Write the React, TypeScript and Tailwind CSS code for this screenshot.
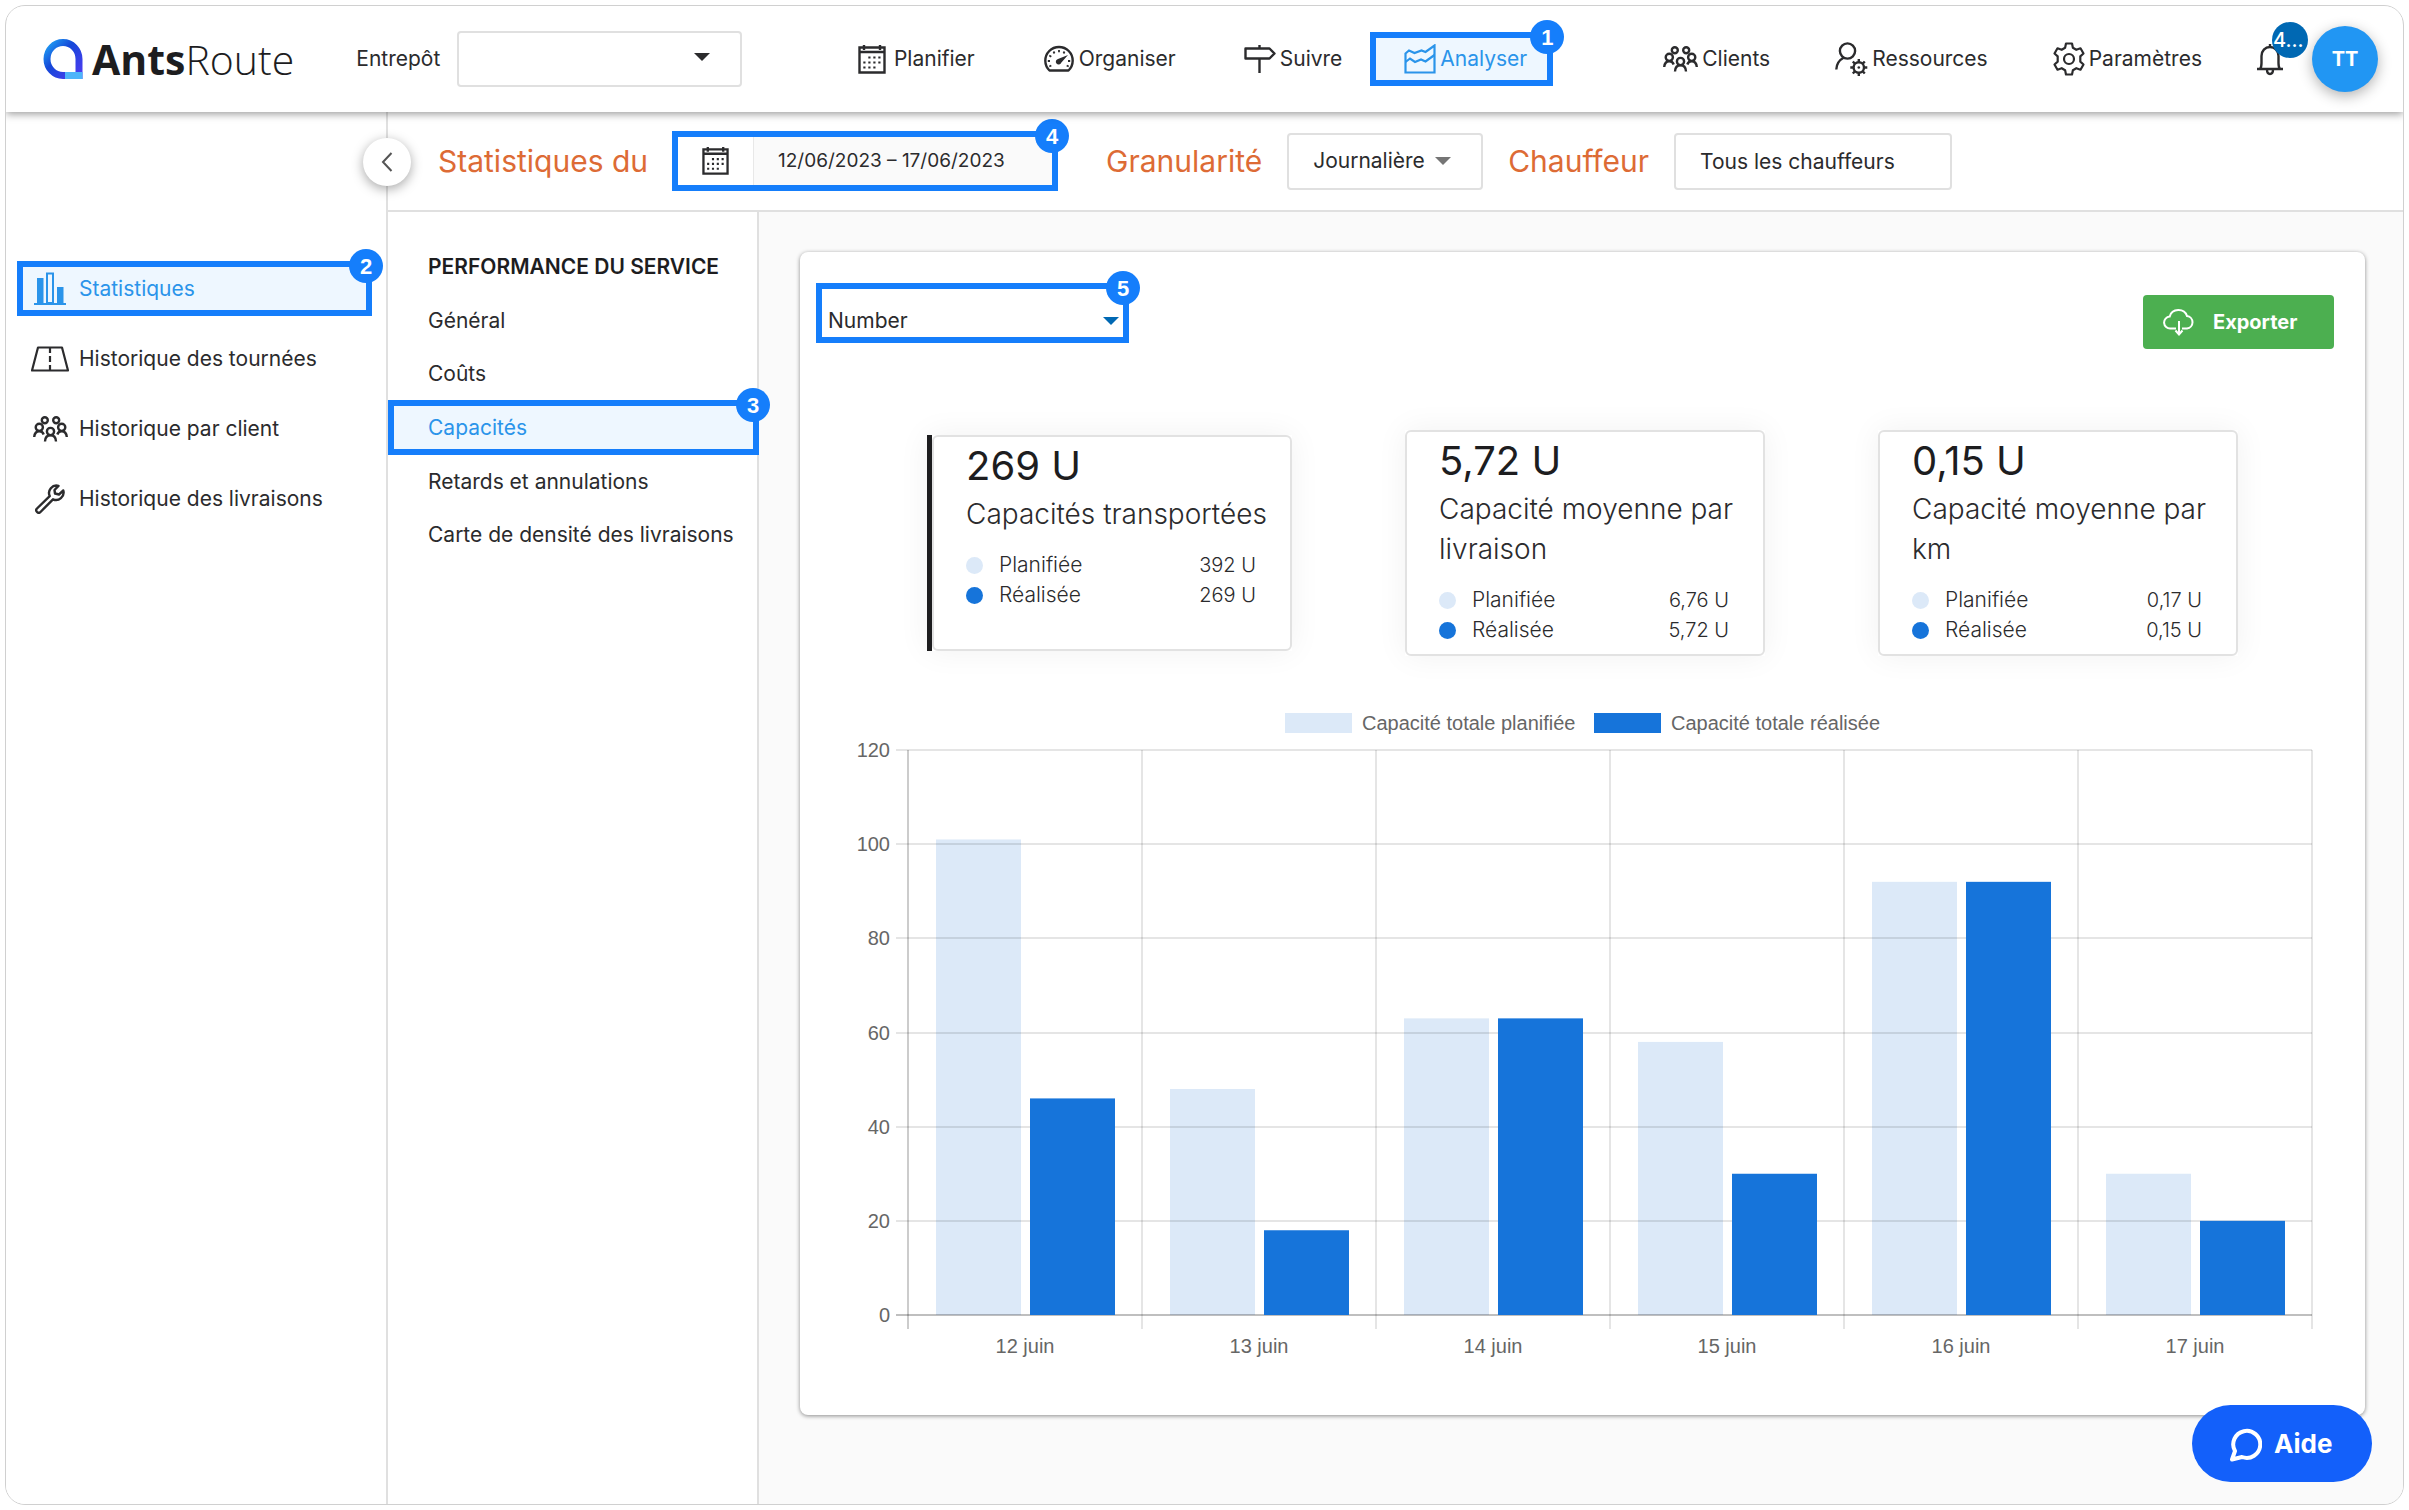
import type { ReactNode } from 'react'

const days = [
  { label: '12 juin', planned: 101, done: 46 },
  { label: '13 juin', planned: 48, done: 18 },
  { label: '14 juin', planned: 63, done: 63 },
  { label: '15 juin', planned: 58, done: 30 },
  { label: '16 juin', planned: 92, done: 92 },
  { label: '17 juin', planned: 30, done: 20 },
]

const cards = [
  { value: '269 U', title: 'Capacités transportées', planned: '392 U', done: '269 U', active: true },
  { value: '5,72 U', title: 'Capacité moyenne par livraison', planned: '6,76 U', done: '5,72 U' },
  { value: '0,15 U', title: 'Capacité moyenne par km', planned: '0,17 U', done: '0,15 U' },
]

function Step({ n }: { n: number }) {
  return (
    <span className="absolute -right-[17px] -top-[18px] z-10 flex size-[34px] items-center justify-center rounded-full bg-[#157efb] font-['Liberation_Sans',sans-serif] text-[22px] font-bold text-white">
      {n}
    </span>
  )
}

function Caret({ className }: { className?: string }) {
  return (
    <svg viewBox="0 0 16 8" className={`h-2 w-4 ${className ?? ''}`} fill="currentColor" aria-hidden="true">
      <path d="M0 0h16L8 8z" />
    </svg>
  )
}

function CalendarIcon({ className }: { className?: string }) {
  return (
    <svg viewBox="0 0 28 29" className={className} fill="none" stroke="currentColor" strokeWidth="2.400" aria-hidden="true">
      <path d="M1.500 2.500h25v25h-25zM1.500 7h25M6 0v5M22 0v5" />
      <path d="M10.300 12.500h14M5.300 17.500h19M5.300 22.500h14" strokeWidth="2.200" strokeDasharray="2.200 2.800" />
    </svg>
  )
}

function GaugeIcon() {
  return (
    <svg viewBox="0 0 32 28" className="h-7 w-8" fill="none" stroke="currentColor" strokeWidth="2.400" aria-hidden="true">
      <path d="M6.500 25.500A13.700 13.700 0 1 1 25.500 25.500z" strokeLinejoin="round" />
      <path d="M16 5v2.200M10.500 6.500l1 2M21.500 6.500l-1 2M6.300 10.500l2 1.200M4.800 16h2.200M27.200 16H25M6.300 21.500l2-1M25.700 21.500l-2-1" strokeWidth="1.800" />
      <path d="M25 10 15 14a2.800 2.800 0 1 0 3.200 3.800z" fill="currentColor" stroke="none" />
    </svg>
  )
}

function SignIcon() {
  return (
    <svg viewBox="0 0 32 30" className="h-[30px] w-8" fill="none" stroke="currentColor" strokeWidth="2.400" aria-hidden="true">
      <path d="M1.500 4.500h24l5 5-5 5h-24zM15.500 1v3.500M15.500 14.500V29" strokeLinejoin="round" />
    </svg>
  )
}

function AreaIcon() {
  return (
    <svg viewBox="0 0 32 30" className="h-[30px] w-8" fill="none" stroke="currentColor" strokeWidth="2.200" aria-hidden="true">
      <path d="M1.500 9.500 5 6.500l5.500 2.500 7-2.500 4 1.500 9-6.500V28.500H1.500z" />
      <path d="m1.500 18 4.500-3.500 5 3.500 6-2.500 4.500 2 9-6.500" />
    </svg>
  )
}

function PeopleIcon() {
  return (
    <svg viewBox="0 0 35 26" className="h-[26px] w-[35px]" fill="none" stroke="currentColor" strokeWidth="2.400" aria-hidden="true">
      <circle cx="11.800" cy="4.300" r="3" />
      <circle cx="23.200" cy="4.300" r="3" />
      <circle cx="6.300" cy="11.300" r="3.600" />
      <circle cx="28.700" cy="11.300" r="3.600" />
      <circle cx="17.500" cy="15.500" r="3.600" />
      <path d="M1.200 21c.3-3.500 2-5.800 5.100-5.800 2.200 0 3.700 1.300 4.400 3.300M24.300 18.500c.7-2 2.200-3.300 4.400-3.300 3.100 0 4.800 2.300 5.100 5.800M12 25.500c.2-4 2.200-6.200 5.500-6.200s5.300 2.200 5.500 6.200" />
    </svg>
  )
}

function DriverIcon() {
  return (
    <svg viewBox="0 0 33 35" className="h-[35px] w-[33px]" fill="none" stroke="currentColor" strokeWidth="2.400" aria-hidden="true">
      <circle cx="12.500" cy="9" r="7.600" />
      <path d="M1.300 27.500c.2-6 3-9.500 7.700-12" />
      <circle cx="23.800" cy="25.500" r="5.200" />
      <circle cx="23.800" cy="25.500" r="1.300" fill="currentColor" stroke="none" />
      <path d="M23.800 17v3M23.800 31v3M15.300 25.500h3M29.300 25.500h3M17.800 19.500l2.100 2.100M27.700 29.400l2.100 2.100M29.800 19.500l-2.100 2.100M19.900 29.400l-2.100 2.100" />
    </svg>
  )
}

function GearIcon() {
  return (
    <svg viewBox="0 0 32 34" className="h-[34px] w-8" fill="none" stroke="currentColor" strokeWidth="2.200" strokeLinejoin="round" aria-hidden="true">
      <path d="M13 1.500h6l.9 4.300 3.400 2 4.200-1.500 3 5.200-3.200 2.900v5.200l3.200 2.900-3 5.200-4.200-1.500-3.400 2-.9 4.300h-6l-.9-4.300-3.400-2-4.200 1.500-3-5.200 3.200-2.900v-5.200L1.500 11.500l3-5.200 4.200 1.500 3.400-2z" />
      <circle cx="16" cy="17" r="5" />
    </svg>
  )
}

function RoadIcon() {
  return (
    <svg viewBox="0 0 38 26" className="h-[26px] w-[38px]" fill="none" stroke="currentColor" strokeWidth="2.200" aria-hidden="true">
      <path d="M7 1.500h24l6 23H1zM19 2v5M19 10v6M19 19v5" strokeLinejoin="round" />
    </svg>
  )
}

function WrenchIcon() {
  return (
    <svg viewBox="0 0 30 30" className="size-[30px]" fill="none" stroke="currentColor" strokeWidth="2.400" strokeLinejoin="round" aria-hidden="true">
      <path d="M23.500 1.800a7.500 7.500 0 0 0-8.800 10.300L2 24.500a2.400 2.400 0 0 0 3.500 3.500L18 15.300A7.500 7.500 0 0 0 28.300 6.500L24 10.500l-4-1-.5-3.500z" />
    </svg>
  )
}

function BarsIcon() {
  return (
    <svg viewBox="0 0 32 33" className="h-[33px] w-8" aria-hidden="true">
      <path d="M0 31h32v2H0zM3 6h6.500v25H3zM23 15h6.500v16H23z" fill="currentColor" />
      <path d="M13 1.500h6V31h-6z" fill="none" stroke="currentColor" strokeWidth="2" />
    </svg>
  )
}

function NavItem({ icon, children }: { icon: ReactNode; children: ReactNode }) {
  return (
    <a href="#" className="flex items-center gap-1 whitespace-nowrap">
      {icon}
      {children}
    </a>
  )
}

function SideItem({ icon, children }: { icon: ReactNode; children: ReactNode }) {
  return (
    <a href="#" className="flex h-[70px] items-center gap-2.5 pl-[25px]">
      <span className="flex w-[38px] justify-center">{icon}</span>
      {children}
    </a>
  )
}

function Header() {
  return (
    <header className="relative z-20 flex h-[106px] shrink-0 items-center bg-white pl-[37px] pr-[25px] shadow-[0_2px_8px_rgba(0,0,0,0.4)]">
      <a href="#" className="flex items-center gap-[9px] font-['Open_Sans',sans-serif] text-[41px] leading-none text-[#1d1d1f]">
        <svg viewBox="0 0 40 40" className="size-10" fill="none" strokeWidth="7" aria-hidden="true">
          <defs>
            <linearGradient id="drop" x1="0" y1="0" x2="1" y2="1">
              <stop offset="0" stopColor="#1fa2f5" />
              <stop offset="0.400" stopColor="#1548d8" />
              <stop offset="1" stopColor="#4a3cf0" />
            </linearGradient>
          </defs>
          <path d="M36 36.500H20A16 16.500 0 1 1 36 20z" stroke="url(#drop)" />
          <path d="M22 36.500h17.500" stroke="#4db4fa" />
        </svg>
        <span>
          <b>Ants</b>
          <span className="font-light">Route</span>
        </span>
      </a>
      <label htmlFor="depot" className="ml-[62px] mr-[17px]">Entrepôt</label>
      <span className="relative flex">
        <select id="depot" className="h-14 w-[285px] appearance-none rounded border-2 border-[#e0e0e0] bg-white">
          <option></option>
        </select>
        <Caret className="pointer-events-none absolute right-8 top-[22px]" />
      </span>
      <nav className="ml-auto flex items-center">
        <div className="flex items-center gap-[68px]">
          <NavItem icon={<CalendarIcon className="mr-1 h-[29px] w-7" />}>Planifier</NavItem>
          <NavItem icon={<GaugeIcon />}>Organiser</NavItem>
          <NavItem icon={<SignIcon />}>Suivre</NavItem>
        </div>
        <a href="#" className="relative ml-7 flex h-[54px] items-center gap-1 border-6 border-[#157efb] bg-[#eef7ff] pl-7 pr-5 text-[#2a94ea]">
          <AreaIcon />
          Analyser
          <Step n={1} />
        </a>
        <div className="ml-[110px] flex items-center gap-[65px]">
          <NavItem icon={<PeopleIcon />}>Clients</NavItem>
          <NavItem icon={<DriverIcon />}>Ressources</NavItem>
          <NavItem icon={<GearIcon />}>Paramètres</NavItem>
        </div>
      </nav>
      <button aria-label="Notifications" className="relative ml-[54px] mr-7">
        <svg viewBox="0 0 28 34" className="h-[34px] w-7" fill="none" stroke="currentColor" strokeWidth="2.400" aria-hidden="true">
          <path d="M1 27h26M4 27c1.500-1.500 1.500-3 1.500-6v-7c0-5 3.500-9 8.500-9s8.500 4 8.500 9v7c0 3 0 4.500 1.500 6M14 5V2M11 27.500c0 6 6 6 6 0" />
        </svg>
        <span className="absolute -right-6 -top-5 flex size-9 items-center rounded-full bg-[#0068b3] pl-px text-xl font-medium text-white">4...</span>
      </button>
      <button className="flex size-[66px] items-center justify-center rounded-full bg-[#2196f3] text-xl font-bold text-white shadow-[0_4px_14px_rgba(0,0,0,0.3)]">TT</button>
    </header>
  )
}

function FilterBar() {
  return (
    <div className="flex h-[100px] shrink-0 items-center whitespace-nowrap border-b-2 border-[#e0e0e0] bg-white pl-[50px]">
      <h1 className="text-[30px] text-[#dd6b35]">Statistiques du</h1>
      <button className="relative ml-6 flex h-[60px] w-[386px] items-stretch border-6 border-[#157efb] bg-[#fafafa] text-[19px]">
        <span className="flex w-[76px] items-center justify-center border-r border-[#e8e8e8] bg-white">
          <CalendarIcon className="h-7 w-[27px]" />
        </span>
        <span className="flex items-center pl-6">12/06/2023 – 17/06/2023</span>
        <Step n={4} />
      </button>
      <label htmlFor="grain" className="ml-12 text-[30px] text-[#dd6b35]">Granularité</label>
      <span className="relative ml-[25px] flex items-center">
        <select id="grain" className="h-[57px] w-[196px] appearance-none rounded border-2 border-[#e0e0e0] bg-white pl-6">
          <option>Journalière</option>
        </select>
        <Caret className="pointer-events-none absolute right-8 text-[#757575]" />
      </span>
      <label htmlFor="driver" className="ml-[25px] text-[30px] text-[#dd6b35]">Chauffeur</label>
      <input id="driver" defaultValue="Tous les chauffeurs" className="ml-[25px] h-[57px] w-[278px] rounded border-2 border-[#e0e0e0] bg-white pl-6" />
    </div>
  )
}

function StatCard({ value, title, planned, done, active }: (typeof cards)[number]) {
  return (
    <article className={active ? 'border-l-[5px] border-[#1d1d1f] shadow-[0_0_30px_rgba(0,0,0,0.06)]' : 'shadow-[0_0_30px_rgba(0,0,0,0.06)]'}>
      <div className={`w-[360px] rounded-md border-2 border-[#e2e2e2] bg-white pl-8 pr-[34px] ${active ? 'h-[216px]' : 'h-[226px]'}`}>
        <p className="text-[40px] leading-[57px] text-[#1d1d1f]">{value}</p>
        <h3 className="-mr-6 text-[28px] font-light leading-10">{title}</h3>
        <dl className="pt-4 font-light leading-[30px]">
          <div className="flex items-center">
            <span className="mr-4 size-[17px] rounded-full bg-[#dce9f8]" />
            <dt>Planifiée</dt>
            <dd className="ml-auto text-xl">{planned}</dd>
          </div>
          <div className="flex items-center">
            <span className="mr-4 size-[17px] rounded-full bg-[#1674da]" />
            <dt>Réalisée</dt>
            <dd className="ml-auto text-xl">{done}</dd>
          </div>
        </dl>
      </div>
    </article>
  )
}

function BarChart() {
  const left = 108
  const bottom = 616
  const colW = 234
  const scale = 565 / 120
  return (
    <svg viewBox="0 0 1565 670" className="block w-full font-['Liberation_Sans',sans-serif] text-[20px]" fill="#666" role="img" aria-label="Capacité totale par jour">
      <rect x="485" y="14" width="67" height="20" fill="#dce9f8" />
      <text x="562" y="31">Capacité totale planifiée</text>
      <rect x="794" y="14" width="67" height="20" fill="#1674da" />
      <text x="871" y="31">Capacité totale réalisée</text>
      {days.map((d, i) => (
        <g key={d.label}>
          <rect x={left + i * colW + 28} y={bottom - d.planned * scale} width="85" height={d.planned * scale} fill="#dce9f8" />
          <text x={left + i * colW + colW / 2} y="654" textAnchor="middle">{d.label}</text>
        </g>
      ))}
      {[0, 20, 40, 60, 80, 100, 120].map((t) => (
        <g key={t}>
          <path d={`M${left - 12} ${Math.round(bottom - t * scale)}h${colW * 6 + 12}`} stroke={t === 0 ? '#00000040' : '#0000001a'} strokeWidth="2" />
          <text x="90" y={bottom - t * scale + 7} textAnchor="end">{t}</text>
        </g>
      ))}
      {[0, 1, 2, 3, 4, 5, 6].map((i) => (
        <path key={i} d={`M${left + i * colW} 51v579`} stroke={i === 0 ? '#00000033' : '#0000001a'} strokeWidth="2" />
      ))}
      {days.map((d, i) => (
        <rect key={d.label} x={left + i * colW + 122} y={bottom - d.done * scale} width="85" height={d.done * scale} fill="#1674da" />
      ))}
    </svg>
  )
}

export default function App() {
  return (
    <div className="flex min-h-screen flex-col bg-white p-[5px] font-[Inter,sans-serif] text-[21px] leading-normal text-[#2b2b2d]">
      <div className="flex grow flex-col overflow-hidden rounded-[20px] border border-[#d0d0d0]">
        <Header />
        <div className="flex grow">
          <aside className="relative w-[382px] shrink-0 border-r-2 border-[#e0e0e0] bg-white">
            <button aria-label="Replier le menu" className="absolute -right-[25px] top-[26px] z-10 flex size-12 items-center justify-center rounded-full bg-white shadow-[0_3px_12px_rgba(0,0,0,0.35)]">
              <svg viewBox="0 0 12 20" className="h-5 w-3" fill="none" stroke="#555" strokeWidth="2" aria-hidden="true">
                <path d="M10.500 1 2 10l8.500 9" />
              </svg>
            </button>
            <nav className="pt-[149px]">
              <a href="#" className="relative ml-[11px] mr-[14px] flex h-[55px] items-center border-6 border-[#157efb] bg-[#eef7ff] pl-[11px] text-[#2a94ea]">
                <span className="flex w-[45px]"><BarsIcon /></span>
                Statistiques
                <Step n={2} />
              </a>
              <div className="pt-2">
                <SideItem icon={<RoadIcon />}>Historique des tournées</SideItem>
                <SideItem icon={<PeopleIcon />}>Historique par client</SideItem>
                <SideItem icon={<WrenchIcon />}>Historique des livraisons</SideItem>
              </div>
            </nav>
          </aside>
          <div className="flex min-w-0 grow flex-col">
            <FilterBar />
            <div className="flex grow">
              <nav className="w-[371px] shrink-0 border-r-2 border-[#e0e0e0] bg-white pt-7">
                <h2 className="flex h-[54px] items-center whitespace-nowrap pl-10 font-semibold text-[#1d1d1f]">PERFORMANCE DU SERVICE</h2>
                <a href="#" className="flex h-[53px] items-center pl-10">Général</a>
                <a href="#" className="flex h-[53px] items-center pl-10">Coûts</a>
                <a href="#" className="relative -mr-0.5 flex h-[55px] items-center border-6 border-[#157efb] bg-[#eef7ff] pl-[34px] text-[#2a94ea]">
                  Capacités
                  <Step n={3} />
                </a>
                <a href="#" className="flex h-[53px] items-center pl-10">Retards et annulations</a>
                <a href="#" className="flex h-[53px] items-center whitespace-nowrap pl-10">Carte de densité des livraisons</a>
              </nav>
              <main className="min-w-0 grow bg-[#fafafa] pb-10 pl-[41px] pr-[38px] pt-10">
                <section className="rounded-lg bg-white pb-[46px] shadow-[0_1px_4px_rgba(0,0,0,0.45)]">
                  <div className="flex items-start justify-between pl-4 pr-[31px] pt-[31px]">
                    <span className="relative flex h-[60px] w-[313px] border-6 border-[#157efb]">
                      <select aria-label="Unité" className="w-full appearance-none bg-white pl-1.5 pt-4">
                        <option>Number</option>
                      </select>
                      <Caret className="pointer-events-none absolute right-1 top-7 text-[#0068b3]" />
                      <Step n={5} />
                    </span>
                    <button className="mt-3 flex h-[54px] w-[191px] items-center gap-[18px] rounded bg-[#4caf50] pl-5 text-xl font-bold text-white">
                      <svg viewBox="0 0 32 28" className="h-7 w-8" fill="none" stroke="currentColor" strokeWidth="2" aria-hidden="true">
                        <path d="M13 20.500H7.500a6 6 0 0 1-.8-12A9 8.500 0 0 1 24 8a6.300 6.300 0 0 1 0 12.500h-5M16 13v12M12.500 22.500l3.500 4 3.500-4" />
                      </svg>
                      Exporter
                    </button>
                  </div>
                  <div className="mt-[81px] flex h-[226px] items-center justify-between px-[127px]">
                    {cards.map((c) => (
                      <StatCard key={c.value} {...c} />
                    ))}
                  </div>
                  <div className="mt-[43px]">
                    <BarChart />
                  </div>
                </section>
              </main>
            </div>
          </div>
        </div>
      </div>
      <button className="fixed bottom-7 right-[37px] z-30 flex h-[77px] w-[180px] items-center gap-3 rounded-full bg-[#1360fa] pl-9 text-[26px] font-bold text-white">
        <svg viewBox="0 0 34 36" className="h-9 w-[34px]" fill="none" stroke="currentColor" strokeWidth="4" strokeLinejoin="round" aria-hidden="true">
          <path d="M7 25A13.500 13.500 0 1 1 14 31L4 33.500z" />
        </svg>
        Aide
      </button>
    </div>
  )
}
